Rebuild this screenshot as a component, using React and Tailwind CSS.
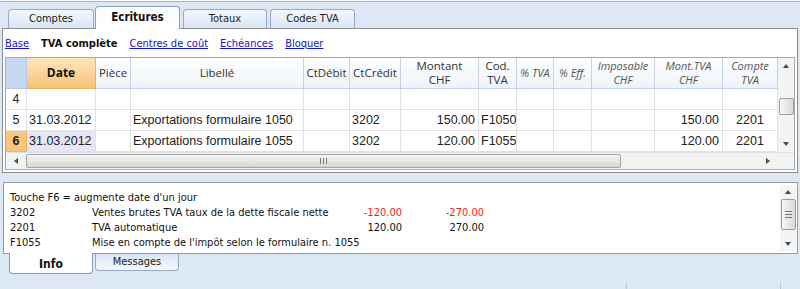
import React from "react";

const ui = { fontFamily: '"DejaVu Sans Condensed", "Liberation Sans", sans-serif' };
const cell = { fontFamily: '"Liberation Sans", Arial, sans-serif' };
const head = { fontFamily: '"Open Sans", "Liberation Sans", sans-serif' };

const cols = [
  { key: "date", w: 69, label: ["Date"] },
  { key: "piece", w: 35, label: ["Pièce"] },
  { key: "lib", w: 173, label: ["Libellé"] },
  { key: "deb", w: 46, label: ["CtDébit"] },
  { key: "cre", w: 51, label: ["CtCrédit"] },
  { key: "mnt", w: 78, label: ["Montant", "CHF"], right: true },
  { key: "cod", w: 38, label: ["Cod.", "TVA"] },
  { key: "ptva", w: 37, label: ["% TVA"], it: true },
  { key: "peff", w: 38, label: ["% Eff."], it: true },
  { key: "imp", w: 63, label: ["Imposable", "CHF"], it: true },
  { key: "mtva", w: 68, label: ["Mont.TVA", "CHF"], it: true, right: true },
  { key: "cpt", w: 55, label: ["Compte", "TVA"], it: true, center: true },
];

const rows = [
  { n: 4 },
  { n: 5, date: "31.03.2012", lib: "Exportations formulaire 1050", cre: "3202", mnt: "150.00", cod: "F1050", mtva: "150.00", cpt: "2201" },
  { n: 6, sel: true, date: "31.03.2012", lib: "Exportations formulaire 1055", cre: "3202", mnt: "120.00", cod: "F1055", mtva: "120.00", cpt: "2201" },
];

function Tab({ label, active, w }) {
  if (active) {
    return (
      <div
        style={{ width: w }}
        className="relative z-10 -mb-px flex h-[23px] items-center justify-center rounded-t-[4px] border border-b-0 border-[#8b9fbd] bg-gradient-to-b from-[#fbfcfe] to-white text-[11.5px] font-bold text-[#111]"
      >
        {label}
      </div>
    );
  }
  return (
    <div
      style={{ width: w }}
      className="flex h-[19px] items-center justify-center rounded-t-[4px] border border-b-0 border-[#97a9c4] bg-gradient-to-b from-[#f5f8fd] to-[#d9e5f5] pt-px text-[11px] text-[#222]"
    >
      {label}
    </div>
  );
}

function Arrow({ dir }) {
  const p = {
    up: "M0 4 L3 0 L6 4 Z",
    down: "M0 0 L6 0 L3 4 Z",
    left: "M4 0 L4 6 L0 3 Z",
    right: "M0 0 L4 3 L0 6 Z",
  }[dir];
  const vertical = dir === "up" || dir === "down";
  return (
    <svg width={vertical ? 6 : 4} height={vertical ? 4 : 6}>
      <path d={p} fill="#4a4a4a" />
    </svg>
  );
}

export default function App() {
  return (
    <div style={ui} className="relative h-[289px] w-[800px] overflow-hidden bg-[#dde8f5] text-[#111]">
      <div className="h-px bg-white" />
      <div className="h-px bg-[#a7b4c6]" />

      {/* top tabs */}
      <div className="flex h-[26px] items-end gap-[1px] pl-[8px]">
        <Tab label="Comptes" w={86} />
        <Tab label="Ecritures" w={85} active />
        <div className="w-px" />
        <Tab label="Totaux" w={84} />
        <div className="w-px" />
        <Tab label="Codes TVA" w={85} />
      </div>

      {/* main panel */}
      <div className="ml-[2px] h-[145px] w-[796px] border border-[#8d8f91] bg-white">
        <div className="flex h-[28px] items-center gap-[12px] pl-[2px] pt-[3px] text-[11px]">
          <span className="text-[#1515d6] underline">Base</span>
          <span className="font-bold text-[#111]">TVA complète</span>
          <span className="text-[#1515d6] underline">Centres de coût</span>
          <span className="text-[#1515d6] underline">Echéances</span>
          <span className="text-[#1515d6] underline">Bloquer</span>
        </div>

        <div className="ml-[2px] w-[790px] border border-[#a9a9a9]">
          <div className="flex">
            <div className="w-[772px]">
              {/* header */}
              <div style={head} className="flex h-[31px] text-[11.5px] leading-[14px]">
                <div className="w-[21px] border-r border-b border-[#b7c7dd] bg-[#c8d9ef]" />
                {cols.map((c) =>
                  c.key === "date" ? (
                    <div
                      key={c.key}
                      style={{ width: c.w }}
                      className="flex items-center justify-center border-r border-b border-[#f0b55c] bg-gradient-to-b from-[#fde6bf] to-[#f7c370] text-[12px] font-bold"
                    >
                      Date
                    </div>
                  ) : (
                    <div
                      key={c.key}
                      style={{ width: c.w }}
                      className={
                        "flex flex-col items-center justify-center border-r border-b border-[#c3d2e6] bg-gradient-to-b from-white to-[#eef3fa] whitespace-nowrap " +
                        (c.it ? "italic text-[#555] text-[11px]" : "text-[#333]")
                      }
                    >
                      {c.label.map((l) => (
                        <span key={l}>{l}</span>
                      ))}
                    </div>
                  )
                )}
              </div>
              {/* rows */}
              {rows.map((r) => (
                <div key={r.n} style={cell} className="flex h-[21px] text-[12.5px] text-[#222]">
                  <div
                    className={
                      "flex w-[21px] items-center justify-center border-r border-b " +
                      (r.sel ? "border-[#f0b55c] bg-[#f8c67c] font-bold" : "border-[#dfe3ea] bg-white")
                    }
                  >
                    {r.n}
                  </div>
                  {cols.map((c) => (
                    <div
                      key={c.key}
                      style={{ width: c.w }}
                      className={
                        "flex items-center overflow-hidden whitespace-nowrap border-r border-b border-[#e2e2e2] " +
                        (c.right ? "justify-end pr-[3px] " : c.center ? "justify-center " : "pl-[2px] ") +
                        (r.sel && c.key === "date" ? "bg-[#e6e6f8]" : "bg-white")
                      }
                    >
                      {r[c.key] || ""}
                    </div>
                  ))}
                </div>
              ))}
            </div>
            {/* vertical scrollbar */}
            <div className="flex h-[94px] w-[16px] flex-col items-center bg-[#f4f4f4]">
              <div className="flex h-[14px] items-center justify-center pt-[2px]">
                <Arrow dir="up" />
              </div>
              <div className="mt-[26px] h-[17px] w-[15px] rounded-[2px] border border-[#9b9b9b] bg-gradient-to-r from-[#f7f7f7] to-[#dadada]" />
              <div className="flex-1" />
              <div className="flex h-[14px] items-center justify-center pb-[2px]">
                <Arrow dir="down" />
              </div>
            </div>
          </div>
          {/* horizontal scrollbar */}
          <div className="flex h-[17px] border-t border-[#e0e0e0] bg-[#f2f2f2]">
            <div className="flex w-[772px] items-center">
              <div className="flex w-[20px] items-center justify-center">
                <Arrow dir="left" />
              </div>
              <div className="flex h-[14px] w-[595px] items-center justify-center rounded-[2px] border border-[#a4a4a4] bg-gradient-to-b from-[#f6f6f6] to-[#d6d6d6]">
                <div className="flex gap-[2px]">
                  <div className="h-[6px] w-px bg-[#777]" />
                  <div className="h-[6px] w-px bg-[#777]" />
                  <div className="h-[6px] w-px bg-[#777]" />
                </div>
              </div>
              <div className="flex-1" />
              <div className="flex w-[20px] items-center justify-center">
                <Arrow dir="right" />
              </div>
            </div>
            <div className="w-[16px] bg-[#f2f2f2]" />
          </div>
        </div>
      </div>

      {/* info panel */}
      <div className="ml-[3px] mt-[9px] flex h-[72px] w-[795px] border border-[#9a9a9a] bg-white">
        <div className="flex-1 pl-[6px] pt-[7px] text-[11px] leading-[15px]">
          <div>Touche F6 = augmente date d'un jour</div>
          <div className="flex">
            <span className="w-[82px]">3202</span>
            <span className="w-[260px]">Ventes brutes TVA taux de la dette fiscale nette</span>
            <span className="w-[50px] text-right text-[#ff1a1a]">-120.00</span>
            <span className="w-[82px] text-right text-[#ff1a1a]">-270.00</span>
          </div>
          <div className="flex">
            <span className="w-[82px]">2201</span>
            <span className="w-[260px]">TVA automatique</span>
            <span className="w-[50px] text-right">120.00</span>
            <span className="w-[82px] text-right">270.00</span>
          </div>
          <div className="flex">
            <span className="w-[82px]">F1055</span>
            <span>Mise en compte de l'impôt selon le formulaire n. 1055</span>
          </div>
        </div>
        <div className="my-[2px] mr-[1px] flex w-[16px] flex-col items-center bg-[#f4f4f4]">
          <div className="flex h-[14px] items-center justify-center">
            <Arrow dir="up" />
          </div>
          <div className="flex h-[31px] w-[15px] flex-col items-center justify-center gap-[2px] rounded-[2px] border border-[#9b9b9b] bg-gradient-to-r from-[#f7f7f7] to-[#dadada]">
            <div className="h-px w-[7px] bg-[#777]" />
            <div className="h-px w-[7px] bg-[#777]" />
            <div className="h-px w-[7px] bg-[#777]" />
          </div>
          <div className="flex-1" />
          <div className="flex h-[14px] items-center justify-center">
            <Arrow dir="down" />
          </div>
        </div>
      </div>

      {/* bottom tabs */}
      <div className="flex items-start gap-[2px] pl-[9px]">
        <div className="relative z-10 -mt-px flex h-[21px] w-[84px] items-center justify-center rounded-b-[4px] border border-t-0 border-[#8e9aab] bg-white pt-[2px] text-[12px] font-bold">
          Info
        </div>
        <div className="flex h-[17px] w-[84px] items-center justify-center rounded-b-[4px] border border-t-0 border-[#97a9c4] bg-gradient-to-b from-[#d9e5f5] to-[#f5f8fd] text-[11px] text-[#222]">
          Messages
        </div>
      </div>

      {/* status bar separators */}
      <div className="absolute bottom-0 left-[626px] h-[7px] w-px bg-[#c3c9d1]" />
      <div className="absolute bottom-0 left-[780px] h-[7px] w-px bg-[#c3c9d1]" />
    </div>
  );
}
